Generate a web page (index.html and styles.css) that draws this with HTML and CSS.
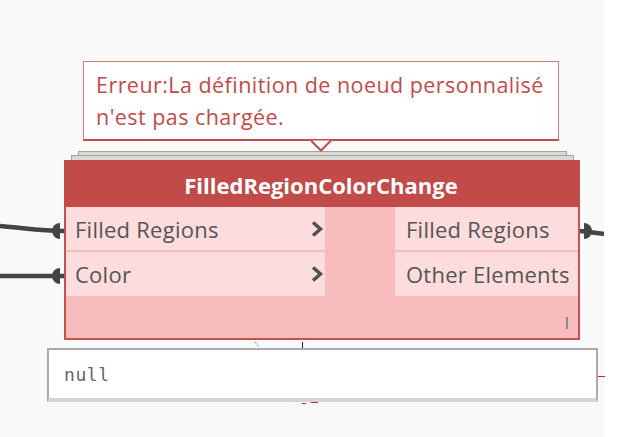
FILE: index.html
```html
<!DOCTYPE html>
<html>
<head>
<meta charset="utf-8">
<link rel="stylesheet" href="styles.css">
</head>
<body>
<div class="canvas">
  <svg class="wires" width="623" height="437" viewBox="0 0 623 437">
    <path d="M0 226 C 25 228, 40 231, 64 231" class="wire"/>
    <path d="M0 276 L 64 276" class="wire"/>
    <path d="M580 231 C 590 232, 596 233, 604 234" class="wire"/>
    <path d="M60 223 A 8 8 0 0 0 60 239 Z" class="port"/>
    <path d="M60 268 A 8 8 0 0 0 60 284 Z" class="port"/>
    <path d="M584 223 A 8 8 0 0 1 584 239 Z" class="port"/>
    <path d="M255 342 L 259 347" class="mark-green"/>
    <path d="M302.5 342 L 302.5 350" class="mark-blue"/>
    <path d="M598 376.5 L 605 376.5" class="mark-red"/>
    <path d="M302 403.5 L 306 403.5 M311 402.5 L 318 402.5" class="mark-red"/>
  </svg>

  <div class="tooltip">Erreur:La définition de noeud personnalisé n'est pas chargée.</div>
  <svg class="tip-arrow" width="24" height="12" viewBox="0 0 24 12">
    <path d="M0 0.5 L 10 10.5 L 20 0.5" class="arrow"/>
  </svg>

  <div class="stack stack-1"></div>
  <div class="stack stack-2"></div>

  <div class="node">
    <div class="node-header">FilledRegionColorChange</div>
    <div class="node-body">
      <div class="ports">
        <div class="col inputs">
          <div class="port-row">
            <span>Filled Regions</span>
            <svg class="chev" width="14" height="18" viewBox="0 0 14 18"><path d="M3 2.5 L 10.5 9 L 3 15.5"/></svg>
          </div>
          <div class="port-row">
            <span>Color</span>
            <svg class="chev" width="14" height="18" viewBox="0 0 14 18"><path d="M3 2.5 L 10.5 9 L 3 15.5"/></svg>
          </div>
        </div>
        <div class="col outputs">
          <div class="port-row out"><span>Filled Regions</span></div>
          <div class="port-row out"><span>Other Elements</span></div>
        </div>
      </div>
      <div class="node-foot"><span class="lacing"></span></div>
    </div>
  </div>

  <div class="preview"><span class="preview-text">null</span></div>
</div>
</body>
</html>
```

FILE: styles.css
```css
html, body {
  margin: 0;
  padding: 0;
  background: #ffffff;
}

.canvas {
  position: relative;
  width: 604px;
  height: 437px;
  background: #f9f9f9;
  overflow: visible;
  font-family: "Open Sans", "Noto Sans", sans-serif;
}

.wires {
  position: absolute;
  left: 0;
  top: 0;
  z-index: 1;
}

.wire {
  fill: none;
  stroke: #444444;
  stroke-width: 4.5;
}

.port {
  fill: #444444;
}

.mark-green {
  stroke: #2f8a2f;
  stroke-width: 1;
  stroke-dasharray: 1 1;
}

.mark-blue {
  stroke: #1010ee;
  stroke-width: 1;
}

.mark-red {
  stroke: #ee1111;
  stroke-width: 1;
}

.tooltip {
  position: absolute;
  left: 83px;
  top: 61px;
  width: 458px;
  height: 70px;
  padding: 7px 4px 0 12px;
  background: #ffffff;
  border: 1px solid #cf7c7a;
  border-bottom: 2px solid #c24b4a;
  color: #c24b4a;
  font-size: 21.5px;
  letter-spacing: 0.45px;
  line-height: 32px;
  z-index: 2;
}

.tip-arrow {
  position: absolute;
  left: 311px;
  top: 140px;
  z-index: 3;
}

.arrow {
  fill: #ffffff;
  stroke: #c24b4a;
  stroke-width: 2;
}

.stack {
  position: absolute;
  height: 4px;
  background: #d9d9d3;
  border: 1px solid #a3a3a3;
  border-bottom: none;
}

.stack-1 {
  left: 78px;
  top: 151px;
  width: 487px;
}

.stack-2 {
  left: 71px;
  top: 155px;
  width: 501px;
}

.node {
  position: absolute;
  left: 64px;
  top: 160px;
  width: 516px;
  z-index: 2;
}

.node-header {
  height: 47px;
  background: #c24b4a;
  color: #ffffff;
  font-weight: 700;
  font-size: 22px;
  line-height: 50px;
  text-align: center;
  padding-right: 2px;
}

.node-body {
  background: #f8bcbc;
  border: 2px solid #c8504e;
  border-top: none;
  display: flex;
  flex-direction: column;
}

.ports {
  display: flex;
  justify-content: space-between;
}

.col {
  display: flex;
  flex-direction: column;
  gap: 2px;
}

.inputs {
  width: 259px;
}

.outputs {
  width: 183px;
}

.port-row {
  height: 43px;
  background: #fcdcdc;
  display: flex;
  align-items: center;
  justify-content: space-between;
  padding: 0 1px 0 9px;
  color: #555555;
  font-size: 22px;
  letter-spacing: 0.25px;
}

.port-row + .port-row {
  height: 44px;
}

.port-row.out {
  padding-left: 11px;
}

.chev {
  fill: none;
  stroke: #505050;
  stroke-width: 3.5;
}

.node-foot {
  height: 42px;
  display: flex;
  justify-content: flex-end;
  align-items: center;
  padding-right: 10px;
}

.lacing {
  display: block;
  width: 2px;
  height: 12px;
  margin-top: 12px;
  background: #8a8a9a;
}

.preview {
  position: absolute;
  left: 47px;
  top: 348px;
  width: 547px;
  height: 48px;
  background: #ffffff;
  border: 2px solid #aaaaaa;
  border-bottom: 4px solid #d4d4d4;
  display: flex;
  align-items: center;
  z-index: 2;
}

.preview-text {
  padding-left: 15px;
  font-family: "DejaVu Sans Mono", "Liberation Mono", monospace;
  font-size: 18px;
  letter-spacing: 0.6px;
  color: #666666;
}
```
